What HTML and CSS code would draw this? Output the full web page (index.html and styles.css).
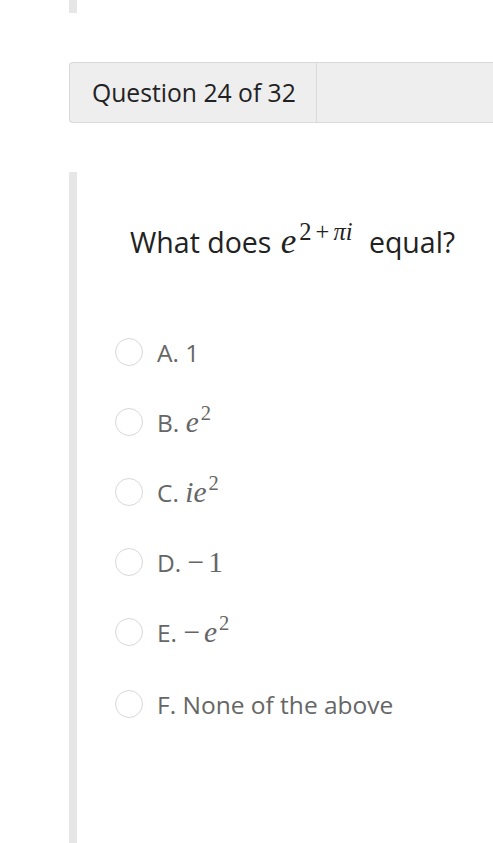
FILE: index.html
```html
<!DOCTYPE html>
<html>
<head>
<meta charset="utf-8">
<link rel="stylesheet" href="styles.css">
</head>
<body>
<div class="page">
  <div class="prev-stub"></div>
  <div class="header">
    <div class="header-title">Question 24 of 32</div>
    <div class="header-rest"></div>
  </div>
  <div class="question">
    <div class="prompt">What does <span class="m"><i>e</i><sup>2<span class="op">+</span><i>πi</i></sup></span> equal?</div>
    <ul class="options">
      <li class="option"><span class="radio"></span><span class="label">A. 1</span></li>
      <li class="option"><span class="radio"></span><span class="label">B. <span class="m"><i>e</i><sup>2</sup></span></span></li>
      <li class="option"><span class="radio"></span><span class="label">C. <span class="m"><i>ie</i><sup>2</sup></span></span></li>
      <li class="option"><span class="radio"></span><span class="label">D. <span class="m"><span class="neg">−</span>1</span></span></li>
      <li class="option"><span class="radio"></span><span class="label">E. <span class="m"><span class="neg">−</span><i>e</i><sup>2</sup></span></span></li>
      <li class="option last"><span class="radio"></span><span class="label">F. None of the above</span></li>
    </ul>
  </div>
</div>
</body>
</html>
```

FILE: styles.css
```css
html, body {
  margin: 0;
  padding: 0;
  background: #fff;
}
body {
  font-family: "Open Sans", "Liberation Sans", sans-serif;
  width: 493px;
  height: 843px;
  overflow: hidden;
}
.page {
  padding-left: 69px;
}
.prev-stub {
  width: 8px;
  height: 13px;
  background: #e6e6e6;
}
.header {
  margin-top: 49px;
  display: flex;
  height: 59px;
  border: 1px solid #d9d9d9;
  border-right: none;
  border-radius: 4px 0 0 4px;
  background: #eeeeee;
}
.header-title {
  width: 247px;
  border-right: 1px solid #d9d9d9;
  display: flex;
  align-items: center;
  padding-left: 22px;
  box-sizing: border-box;
  font-size: 24.7px;
  color: #222;
  white-space: nowrap;
}
.header-rest {
  flex: 1;
}
.question {
  margin-top: 49px;
  border-left: 8px solid #e6e6e6;
  height: 700px;
  box-sizing: border-box;
  padding-top: 50px;
}
.prompt {
  padding-left: 53px;
  font-size: 28.5px;
  color: #222;
  line-height: 40px;
  white-space: nowrap;
}
.m {
  font-family: "Liberation Serif", "DejaVu Serif", serif;
  font-size: 1.25em;
}
.m i {
  font-style: italic;
}
.m sup {
  font-size: 0.7em;
  vertical-align: 0.55em;
  line-height: 0;
  margin-left: 2px;
}
.prompt .m {
  font-size: 1.23em;
  margin-left: 2px;
}
.prompt .m sup {
  margin-left: 3px;
  margin-right: 9px;
}
.op {
  margin: 0 4px;
}
.neg {
  margin-right: 4px;
}
.options {
  list-style: none;
  margin: 55px 0 0 0;
  padding: 0 0 0 38px;
}
.option {
  display: flex;
  align-items: center;
  height: 70px;
}
.option.last {
  margin-top: 2px;
}
.radio {
  width: 28px;
  height: 28px;
  box-sizing: border-box;
  border: 1.5px solid #d8d8d8;
  border-radius: 50%;
  margin-right: 14px;
  flex: none;
}
.label {
  font-size: 24.5px;
  color: #666;
  white-space: nowrap;
}
.label .m {
  font-size: 1.2em;
}
```
